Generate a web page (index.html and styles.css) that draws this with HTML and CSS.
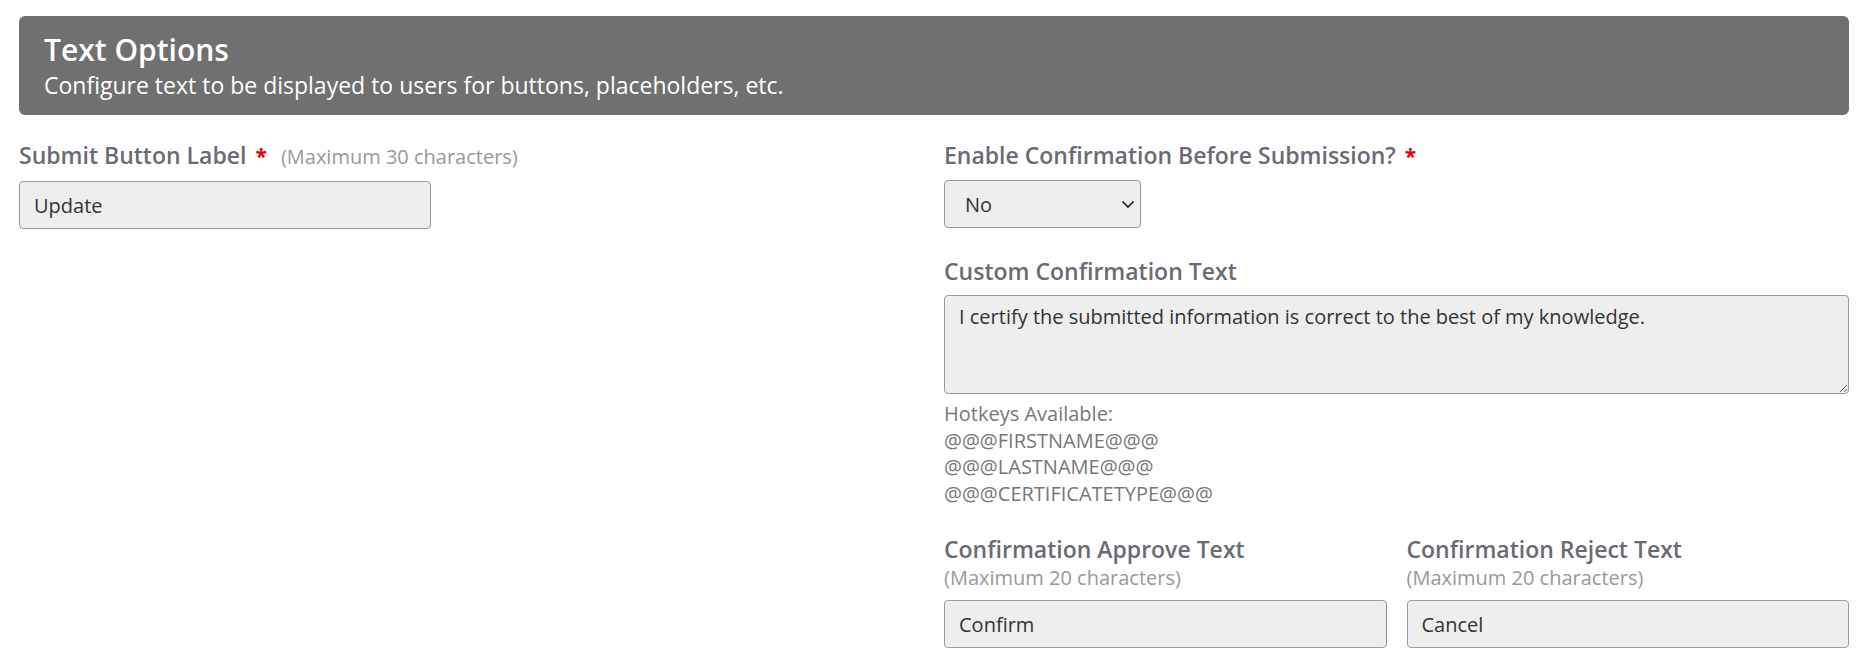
FILE: index.html
```html
<!DOCTYPE html>
<html lang="en">
<head>
<meta charset="utf-8">
<title>Text Options</title>
<link rel="stylesheet" href="styles.css">
</head>
<body>
<div class="page">
  <div class="panel-head">
    <h2 class="panel-title">Text Options</h2>
    <p class="panel-sub">Configure text to be displayed to users for buttons, placeholders, etc.</p>
  </div>
  <div class="cols">
    <div class="col">
      <div class="group">
        <label class="lbl">Submit Button Label<span class="req">*</span><span class="hint-inline">(Maximum 30 characters)</span></label>
        <input class="field field-short" type="text" value="Update">
      </div>
    </div>
    <div class="col">
      <div class="group">
        <label class="lbl">Enable Confirmation Before Submission?<span class="req">*</span></label>
        <div class="select-wrap">
          <select class="field field-select">
            <option>No</option>
            <option>Yes</option>
          </select>
          <svg class="chev" width="14" height="9" viewBox="0 0 14 9"><path d="M1.5 1.5 L7 7 L12.5 1.5" fill="none" stroke="#222" stroke-width="1.7"/></svg>
        </div>
      </div>
      <div class="group group-tight">
        <label class="lbl">Custom Confirmation Text</label>
        <textarea class="field field-area">I certify the submitted information is correct to the best of my knowledge.</textarea>
        <div class="hotkeys">
          <div>Hotkeys Available:</div>
          <div>@@@FIRSTNAME@@@</div>
          <div>@@@LASTNAME@@@</div>
          <div>@@@CERTIFICATETYPE@@@</div>
        </div>
      </div>
      <div class="subcols">
        <div class="group">
          <label class="lbl">Confirmation Approve Text</label>
          <div class="hint">(Maximum 20 characters)</div>
          <input class="field" type="text" value="Confirm">
        </div>
        <div class="group">
          <label class="lbl">Confirmation Reject Text</label>
          <div class="hint">(Maximum 20 characters)</div>
          <input class="field" type="text" value="Cancel">
        </div>
      </div>
    </div>
  </div>
</div>
</body>
</html>
```

FILE: styles.css
```css
* { box-sizing: border-box; }
html, body { margin: 0; padding: 0; background: #ffffff; }
body {
  font-family: "Open Sans", "Liberation Sans", sans-serif;
  color: #333333;
}
.page {
  padding: 16px 13px 0 19px;
}
.panel-head {
  background: #707070;
  color: #ffffff;
  border-radius: 6px;
  padding: 16px 25px 15px 25px;
}
.panel-title {
  margin: 0;
  font-size: 30px;
  font-weight: 600;
  line-height: 36px;
}
.panel-sub {
  margin: 2px 0 0 0;
  font-size: 23px;
  font-weight: 400;
  line-height: 30px;
}
.cols {
  display: grid;
  grid-template-columns: 1fr 1fr;
  column-gap: 20px;
  margin-top: 24px;
}
.subcols {
  display: grid;
  grid-template-columns: 1fr 1fr;
  column-gap: 20px;
}
.group {
  margin-bottom: 27px;
}
.group-tight {
  margin-bottom: 25px;
}
.lbl {
  display: block;
  font-size: 23px;
  font-weight: 600;
  line-height: 32px;
  color: #6a6b73;
  margin-bottom: 8px;
}
.req {
  color: #e00000;
  font-size: 21px;
  font-weight: 700;
  margin-left: 9px;
}
.hint-inline {
  font-size: 20px;
  font-weight: 400;
  color: #999999;
  margin-left: 14px;
}
.hint {
  font-size: 20px;
  line-height: 26.67px;
  color: #999999;
  margin-top: -8px;
  margin-bottom: 9px;
}
.field {
  display: block;
  width: 100%;
  height: 48px;
  margin: 0;
  padding: 0 14px;
  font-family: "Open Sans", "Liberation Sans", sans-serif;
  font-size: 20px;
  color: #333333;
  background: #eeeeee;
  border: 1px solid #999999;
  border-radius: 4px;
  outline: none;
}
.field-short { width: 412px; }
.select-wrap {
  position: relative;
  width: 197px;
}
.field-select {
  appearance: none;
  -webkit-appearance: none;
  padding-left: 20px;
}
.chev {
  position: absolute;
  right: 6px;
  top: 20px;
  pointer-events: none;
}
.field-area {
  height: 99px;
  padding: 7px 14px;
  line-height: 28px;
  resize: vertical;
}
.hotkeys {
  margin-top: 7px;
  font-size: 20px;
  line-height: 26.67px;
  color: #777777;
}
```
